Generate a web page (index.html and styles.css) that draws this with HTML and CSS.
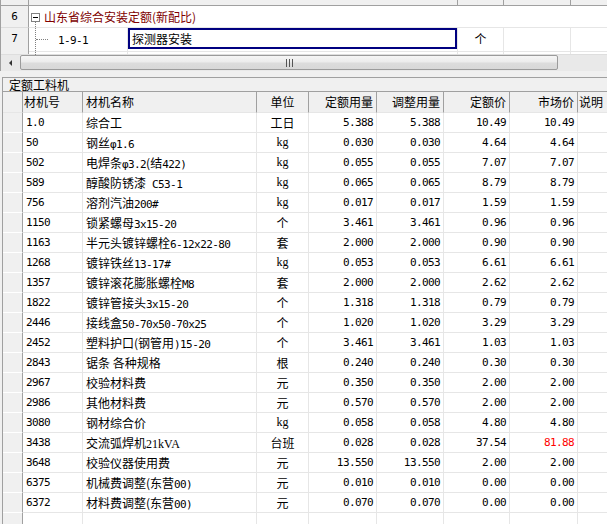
FILE: index.html
```html
<!DOCTYPE html>
<html lang="zh-CN">
<head>
<meta charset="utf-8">
<title>定额工料机</title>
<link rel="stylesheet" href="styles.css">
</head>
<body>
<div class="upper">
  <div class="tgrid strip">
    <div></div><div class="span2"></div><div></div><div></div><div class="last"></div>
  </div>
  <div class="tgrid r6">
    <div class="rn">6</div>
    <div class="t6"><span class="box"></span><span>山东省综合安装定额(新配比)</span></div>
  </div>
  <div class="tgrid r7">
    <div class="rn">7</div>
    <div class="code"><span class="mono">1-9-1</span></div>
    <div class="edcell"><div class="editor">探测器安装</div></div>
    <div class="cc">个</div>
    <div class="cc"></div>
    <div class="cc last"></div>
  </div>
  <div class="tgrid r8">
    <div class="rn"></div>
    <div class="code"></div>
    <div class="cc"></div>
    <div class="cc"></div>
    <div class="cc"></div>
    <div class="cc last"></div>
  </div>
  <div class="hscroll">
    <div class="arrow"></div>
    <div class="thumb">
      <svg width="7" height="8" viewBox="0 0 7 8"><path d="M0.5 0v8M3.5 0v8M6.5 0v8" stroke="#555" stroke-width="1"/></svg>
    </div>
    <div class="trough"></div>
  </div>
</div>
<div class="gap"></div>
<div class="lower">
  <div class="ptitle">定额工料机</div>
  <div class="row head">
    <div></div><div class="hl1">材机号</div><div class="hl3">材机名称</div><div class="u">单位</div><div class="hr">定额用量</div><div class="hr">调整用量</div><div class="hr">定额价</div><div class="hr">市场价</div><div class="hl1">说明</div>
  </div>
  <div class="row"><div></div><div class="c">1.0</div><div class="nm">综合工</div><div class="u">工日</div><div class="n">5.388</div><div class="n">5.388</div><div class="n">10.49</div><div class="n">10.49</div><div></div></div>
  <div class="row"><div></div><div class="c">50</div><div class="nm">钢丝<span class="a">φ1.6</span></div><div class="u k">kg</div><div class="n">0.030</div><div class="n">0.030</div><div class="n">4.64</div><div class="n">4.64</div><div></div></div>
  <div class="row"><div></div><div class="c">502</div><div class="nm">电焊条<span class="a">φ3.2</span>(结<span class="a">422)</span></div><div class="u k">kg</div><div class="n">0.055</div><div class="n">0.055</div><div class="n">7.07</div><div class="n">7.07</div><div></div></div>
  <div class="row"><div></div><div class="c">589</div><div class="nm">醇酸防锈漆<span class="a"> C53-1</span></div><div class="u k">kg</div><div class="n">0.065</div><div class="n">0.065</div><div class="n">8.79</div><div class="n">8.79</div><div></div></div>
  <div class="row"><div></div><div class="c">756</div><div class="nm">溶剂汽油<span class="a">200#</span></div><div class="u k">kg</div><div class="n">0.017</div><div class="n">0.017</div><div class="n">1.59</div><div class="n">1.59</div><div></div></div>
  <div class="row"><div></div><div class="c">1150</div><div class="nm">锁紧螺母<span class="a">3x15-20</span></div><div class="u">个</div><div class="n">3.461</div><div class="n">3.461</div><div class="n">0.96</div><div class="n">0.96</div><div></div></div>
  <div class="row"><div></div><div class="c">1163</div><div class="nm">半元头镀锌螺栓<span class="a">6-12x22-80</span></div><div class="u">套</div><div class="n">2.000</div><div class="n">2.000</div><div class="n">0.90</div><div class="n">0.90</div><div></div></div>
  <div class="row"><div></div><div class="c">1268</div><div class="nm">镀锌铁丝<span class="a">13-17#</span></div><div class="u k">kg</div><div class="n">0.053</div><div class="n">0.053</div><div class="n">6.61</div><div class="n">6.61</div><div></div></div>
  <div class="row"><div></div><div class="c">1357</div><div class="nm">镀锌滚花膨胀螺栓<span class="a">M8</span></div><div class="u">套</div><div class="n">2.000</div><div class="n">2.000</div><div class="n">2.62</div><div class="n">2.62</div><div></div></div>
  <div class="row"><div></div><div class="c">1822</div><div class="nm">镀锌管接头<span class="a">3x15-20</span></div><div class="u">个</div><div class="n">1.318</div><div class="n">1.318</div><div class="n">0.79</div><div class="n">0.79</div><div></div></div>
  <div class="row"><div></div><div class="c">2446</div><div class="nm">接线盒<span class="a">50-70x50-70x25</span></div><div class="u">个</div><div class="n">1.020</div><div class="n">1.020</div><div class="n">3.29</div><div class="n">3.29</div><div></div></div>
  <div class="row"><div></div><div class="c">2452</div><div class="nm">塑料护口(钢管用<span class="a">)15-20</span></div><div class="u">个</div><div class="n">3.461</div><div class="n">3.461</div><div class="n">1.03</div><div class="n">1.03</div><div></div></div>
  <div class="row"><div></div><div class="c">2843</div><div class="nm">锯条 各种规格</div><div class="u">根</div><div class="n">0.240</div><div class="n">0.240</div><div class="n">0.30</div><div class="n">0.30</div><div></div></div>
  <div class="row"><div></div><div class="c">2967</div><div class="nm">校验材料费</div><div class="u">元</div><div class="n">0.350</div><div class="n">0.350</div><div class="n">2.00</div><div class="n">2.00</div><div></div></div>
  <div class="row"><div></div><div class="c">2986</div><div class="nm">其他材料费</div><div class="u">元</div><div class="n">0.570</div><div class="n">0.570</div><div class="n">2.00</div><div class="n">2.00</div><div></div></div>
  <div class="row"><div></div><div class="c">3080</div><div class="nm">钢材综合价</div><div class="u k">kg</div><div class="n">0.058</div><div class="n">0.058</div><div class="n">4.80</div><div class="n">4.80</div><div></div></div>
  <div class="row"><div></div><div class="c">3438</div><div class="nm">交流弧焊机<span class="s">21kVA</span></div><div class="u">台班</div><div class="n">0.028</div><div class="n">0.028</div><div class="n">37.54</div><div class="n red">81.88</div><div></div></div>
  <div class="row"><div></div><div class="c">3648</div><div class="nm">校验仪器使用费</div><div class="u">元</div><div class="n">13.550</div><div class="n">13.550</div><div class="n">2.00</div><div class="n">2.00</div><div></div></div>
  <div class="row"><div></div><div class="c">6375</div><div class="nm">机械费调整(东营<span class="a">00)</span></div><div class="u">元</div><div class="n">0.010</div><div class="n">0.010</div><div class="n">0.00</div><div class="n">0.00</div><div></div></div>
  <div class="row"><div></div><div class="c">6372</div><div class="nm">材料费调整(东营<span class="a">00)</span></div><div class="u">元</div><div class="n">0.070</div><div class="n">0.070</div><div class="n">0.00</div><div class="n">0.00</div><div></div></div>
  <div class="row"><div></div><div class="c"></div><div class="nm"></div><div class="u"></div><div class="n"></div><div class="n"></div><div class="n"></div><div class="n"></div><div></div></div>
</div>
</body>
</html>
```

FILE: styles.css
```css
* { box-sizing: border-box; }
html, body { margin: 0; padding: 0; }
body {
  width: 607px;
  height: 524px;
  overflow: hidden;
  background: #f0f0f0;
  color: #000;
  font-family: "Noto Sans CJK SC", sans-serif;
  font-size: 12px;
}

/* ---------- upper tree grid ---------- */
.upper { border-left: 1px solid #a0a0a0; }
.tgrid {
  display: grid;
  grid-template-columns: 28px 99px 330px 46px 67px 1fr;
  background: #fff;
}
.strip > div {
  height: 6px;
  background: #f0f0f0;
  border-right: 1px solid #a0a0a0;
  border-bottom: 1px solid #a0a0a0;
}
.strip .span2 { grid-column: span 2; }
.strip .last { border-right: 0; }

.rn {
  background: #f0f0f0;
  border-right: 1px solid #a0a0a0;
  border-bottom: 1px solid #dcdcdc;
  text-align: center;
  font-family: "DejaVu Sans Mono", monospace;
  font-size: 11px;
  line-height: 21px;
}
.r6, .r7 { height: 22px; }
.r8 { height: 4px; }
.r8 .rn { border-bottom: 0; }

.t6 {
  grid-column: 2 / -1;
  display: flex;
  align-items: center;
  color: #800000;
  border-bottom: 1px solid #e6e6e6;
  padding-left: 2px;
  line-height: 21px;
}
.box {
  position: relative;
  width: 9px;
  height: 9px;
  margin-right: 4px;
  margin-top: 1px;
  border: 1px solid #808080;
  background: #fff;
}
.box::before {
  content: "";
  position: absolute;
  left: 1px;
  top: 3px;
  width: 5px;
  border-top: 1px solid #000;
}
.box::after {
  content: "";
  position: absolute;
  left: 3px;
  top: 8px;
  height: 33px;
  border-left: 1px dotted #808080;
}

.code {
  position: relative;
  border-right: 1px solid #e6e6e6;
  border-bottom: 1px solid #e6e6e6;
  padding-left: 29px;
  line-height: 21px;
}
.r7 .code::before {
  content: "";
  position: absolute;
  left: 7px;
  top: 11px;
  width: 12px;
  border-top: 1px dotted #808080;
}
.r8 .code, .r8 .cc { border-bottom: 0; }
.mono {
  font-family: "DejaVu Sans Mono", monospace;
  font-size: 11px;
  letter-spacing: -0.6px;
}
.edcell {
  border-right: 1px solid #e6e6e6;
  border-bottom: 1px solid #e6e6e6;
}
.editor {
  height: 21px;
  border: 2px solid #000080;
  padding-left: 2px;
  line-height: 17px;
  background: #fff;
}
.cc {
  border-right: 1px solid #e6e6e6;
  border-bottom: 1px solid #e6e6e6;
  text-align: center;
  line-height: 21px;
}
.cc.last { border-right: 0; }

/* ---------- horizontal scrollbar ---------- */
.hscroll {
  display: flex;
  height: 17px;
  background: #e9e9e9;
  border-top: 1px solid #dedede;
}
.arrow {
  width: 19px;
  display: flex;
  align-items: center;
  justify-content: center;
}
.arrow::before {
  content: "";
  width: 0;
  height: 0;
  border-top: 3px solid transparent;
  border-bottom: 3px solid transparent;
  border-right: 3px solid #333;
}
.thumb {
  width: 538px;
  margin-bottom: 1px;
  border: 1px solid #9b9b9b;
  border-radius: 2px;
  background: linear-gradient(#f6f6f6, #ececec 45%, #dcdcdc 55%, #d8d8d8);
  display: flex;
  align-items: center;
  justify-content: center;
}
.trough { flex: 1; }

.gap { height: 6px; }

/* ---------- lower material grid ---------- */
.lower {
  margin-left: 2px;
  border-left: 1px solid #a0a0a0;
}
.ptitle {
  height: 15px;
  border-top: 1px solid #a0a0a0;
  border-bottom: 1px solid #a0a0a0;
  padding-left: 6px;
  line-height: 13px;
}
.row {
  display: grid;
  grid-template-columns: 20px 60px 174px 52px 68px 67px 66px 68px 40px;
  height: 20px;
}
.row > div {
  background: #fff;
  border-right: 1px solid #e6e6e6;
  border-bottom: 1px solid #e6e6e6;
  line-height: 19px;
  white-space: nowrap;
  overflow: hidden;
}
.row > div:first-child {
  background: #f0f0f0;
  border-right-color: #a0a0a0;
  border-bottom-color: #fff;
}
.row.head { height: 21px; }
.row.head > div {
  background: #f0f0f0;
  border-right-color: #a0a0a0;
  border-bottom-color: #e6e6e6;
  line-height: 20px;
}
.row.head > div:first-child { border-bottom-color: #e6e6e6; }

.hl1 { padding-left: 1px; }
.hl3 { padding-left: 3px; }
.hr { text-align: right; padding-right: 3px; }

.c {
  padding-left: 3px;
  font-family: "DejaVu Sans Mono", monospace;
  font-size: 11px;
  letter-spacing: -0.6px;
}
.nm { padding-left: 3px; }
.a {
  font-family: "DejaVu Sans Mono", monospace;
  font-size: 11px;
  letter-spacing: -0.6px;
}
.s { font-family: "Liberation Serif", serif; font-size: 12px; }
.u { text-align: center; }
.k { font-family: "Liberation Serif", serif; font-size: 12px; }
.n {
  text-align: right;
  padding-right: 3px;
  font-family: "DejaVu Sans Mono", monospace;
  font-size: 11px;
  letter-spacing: -0.6px;
}
.red { color: #f00; }
```
